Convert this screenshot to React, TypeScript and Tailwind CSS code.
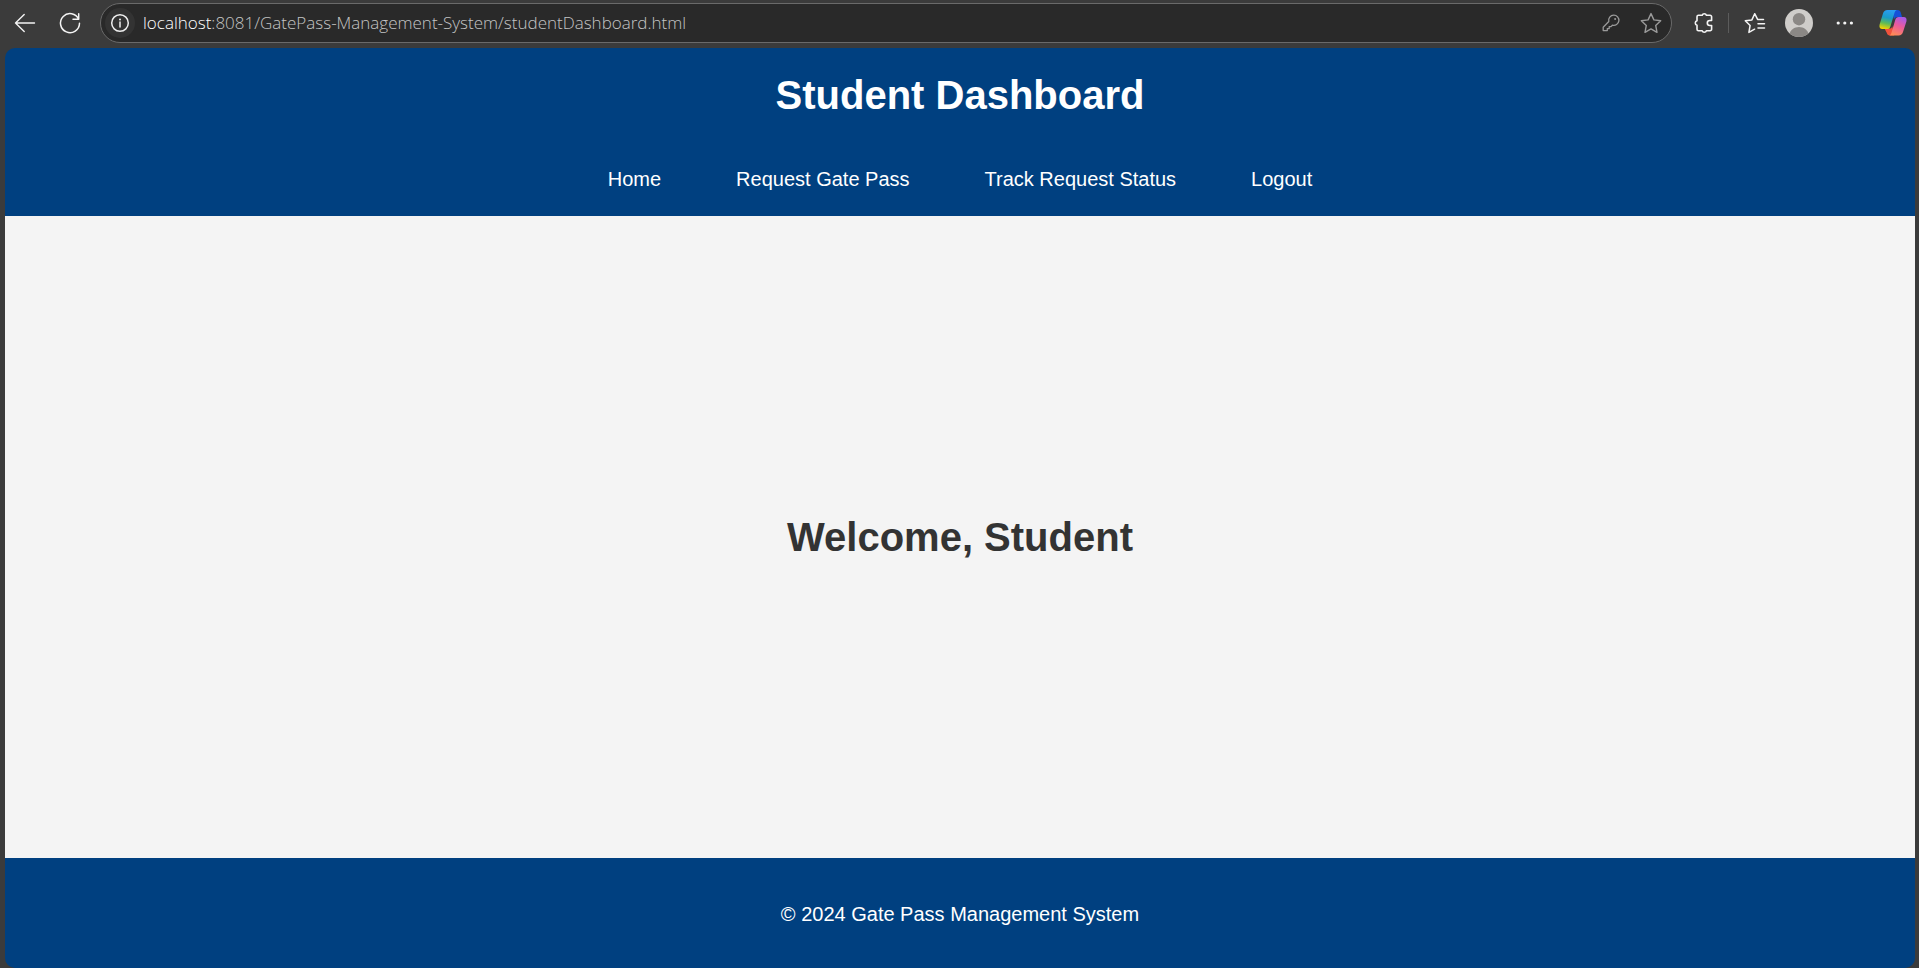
const navLinks = ["Home", "Request Gate Pass", "Track Request Status", "Logout"];

function Toolbar() {
  return (
    <div className="flex h-12 items-center pr-3 pb-0.5 pl-3">
      <button aria-label="Back" className="flex size-6 items-center justify-center">
        <svg width="24" height="24" viewBox="0 0 24 24" fill="none" stroke="#f4f4f4" strokeWidth="1.4" strokeLinecap="round" strokeLinejoin="round">
          <path d="M22.500 12H3.500M12.200 3.500 3.500 12l8.700 8.500" />
        </svg>
      </button>
      <button aria-label="Refresh" className="ml-[22px] flex size-6 items-center justify-center">
        <svg width="24" height="24" viewBox="0 0 24 24" fill="none" stroke="#f4f4f4" strokeWidth="1.5" strokeLinecap="round" strokeLinejoin="round">
          <path d="M20.700 8.300A9.500 9.500 0 1 0 21.500 12.200M20.700 2.700V8.300H15" />
        </svg>
      </button>
      <div className="ml-[18px] flex h-10 min-w-0 flex-1 items-center rounded-full border border-[#6a6a6a] bg-[#292929] pr-2 pl-1">
        <button aria-label="View site information" className="flex size-[30px] shrink-0 items-center justify-center rounded-full bg-[#333333]">
          <svg width="20" height="20" viewBox="0 0 20 20" fill="none" stroke="#eeeeee" strokeWidth="1.5">
            <circle cx="10" cy="10" r="8.300" />
            <path d="M10 9v5" strokeLinecap="round" />
            <circle cx="10" cy="6.500" r="1" fill="#eeeeee" stroke="none" />
          </svg>
        </button>
        <div className="ml-2 min-w-0 flex-1 truncate font-['Open_Sans','Noto_Sans',sans-serif] text-[17px] leading-6 font-light text-[#c4c4c4]">
          <span className="text-white">localhost</span>:8081/GatePass-Management-System/studentDashboard.html
        </div>
        <button aria-label="Saved passwords" className="flex size-5 shrink-0 items-center justify-center">
          <svg width="20" height="20" viewBox="0 0 20 20" fill="none" stroke="#9a9a9a" strokeWidth="1.300" strokeLinejoin="round">
            <path d="M12.700 2.200a5.100 5.100 0 1 1-1.300 10L10 13.600H8.200v2H6.300v2H2.200v-3.400l5.600-5.700A5.100 5.100 0 0 1 12.700 2.200Z" />
            <circle cx="14.100" cy="6" r="1" fill="#9a9a9a" stroke="none" />
          </svg>
        </button>
        <button aria-label="Add this page to favorites" className="ml-[18px] flex size-6 shrink-0 items-center justify-center">
          <svg width="24" height="24" viewBox="0 0 24 24" fill="none" stroke="#9a9a9a" strokeWidth="1.400" strokeLinejoin="round">
            <path d="m12 2.600 2.900 6.300 6.800.8-5 4.700 1.300 6.900L12 17.900l-6 3.400 1.300-6.900-5-4.700 6.800-.8Z" />
          </svg>
        </button>
      </div>
      <button aria-label="Extensions" className="ml-5 flex size-6 shrink-0 items-center justify-center">
        <svg width="24" height="24" viewBox="0 0 24 24" fill="none" stroke="#f4f4f4" strokeWidth="1.600" strokeLinejoin="round">
          <path d="M6.500 4.300h3.700a2.200 2.200 0 0 1 4.200 0h3.700a1.500 1.500 0 0 1 1.500 1.500v3.700h-1.800a2.500 2.500 0 0 0 0 5h1.800v3.700a1.500 1.500 0 0 1-1.500 1.500h-3.700a2.200 2.200 0 0 1-4.200 0H6.500A1.500 1.500 0 0 1 5 18.200v-3.900a2.400 2.400 0 0 1 0-4.600V5.800a1.500 1.500 0 0 1 1.500-1.500Z" />
        </svg>
      </button>
      <div className="ml-3 h-5 w-px bg-[#5c5c5c]" />
      <button aria-label="Favorites" className="ml-3.5 flex size-6 shrink-0 items-center justify-center">
        <svg width="24" height="24" viewBox="0 0 24 24" fill="none" stroke="#f4f4f4" strokeWidth="1.500" strokeLinejoin="round" strokeLinecap="round">
          <path d="M20.500 8.400h-5.900l-2.900-5.700-2.800 6.200-6.600.9 4.800 4.700L5.900 21.400l5.700-3.200M15 12.800h6.500M15 17h6.500" />
        </svg>
      </button>
      <button aria-label="Profile" className="ml-[18px] size-7 shrink-0 overflow-hidden rounded-full">
        <svg width="28" height="28" viewBox="0 0 28 28">
          <rect width="28" height="28" fill="#cfcdca" />
          <circle cx="14" cy="10.200" r="6.200" fill="#8b8885" />
          <path d="M4.300 25.500C5.500 20.700 9.300 18 14 18s8.500 2.700 9.700 7.500L14 30Z" fill="#8b8885" />
        </svg>
      </button>
      <button aria-label="Settings and more" className="ml-5 flex size-6 shrink-0 items-center justify-center">
        <svg width="24" height="24" viewBox="0 0 24 24" fill="#f4f4f4">
          <circle cx="5.200" cy="12" r="1.600" />
          <circle cx="11.800" cy="12" r="1.600" />
          <circle cx="18.400" cy="12" r="1.600" />
        </svg>
      </button>
      <button aria-label="Copilot" className="ml-[22px] flex size-7 shrink-0 items-center justify-center">
        <svg width="28" height="28" viewBox="0 0 28 28">
          <defs>
            <linearGradient id="cool" x1="0.500" y1="0" x2="0.300" y2="1">
              <stop offset="0" stopColor="#2a9cf0" />
              <stop offset="0.400" stopColor="#199bc7" />
              <stop offset="0.700" stopColor="#5fbb56" />
              <stop offset="1" stopColor="#f5d400" />
            </linearGradient>
            <linearGradient id="warm" x1="0.700" y1="0" x2="0.300" y2="1">
              <stop offset="0" stopColor="#a85be8" />
              <stop offset="0.450" stopColor="#ea5a9d" />
              <stop offset="1" stopColor="#ff8b55" />
            </linearGradient>
          </defs>
          <path d="M13 1h5.500c2 0 2.900 1.100 3.400 2.900L23 8h-4.500c-2 0-3 1-3.500 2.800Z" fill="#1550d8" />
          <path d="M5.500 19.600h5c1.500 0 2.300-.8 2.800-2.300l1.900 9.200H11c-2 0-2.800-1.100-3.400-3Z" fill="#f0523c" />
          <path d="M8.500 1h9.300c-1.500.5-2 1.700-2.500 3.400l-3.800 12.800c-.6 2-1.600 2.800-3.500 2.800H3.500C.8 20 0 18 .6 15.500L4 4.500C4.700 2.200 6 1 8.500 1Z" fill="url(#cool)" />
          <path d="M19.800 8h4.700c2.700 0 3.500 2 2.900 4.500L24 23c-.7 2.300-2 3.500-4.500 3.500h-9.300c1.500-.5 2-1.700 2.500-3.400l3.600-12.300c.6-2 1.600-2.800 3.500-2.800Z" fill="url(#warm)" />
        </svg>
      </button>
    </div>
  );
}

export default function App() {
  return (
    <div className="flex min-h-screen flex-col bg-[#3b3b3b]">
      <Toolbar />
      <div className="mr-1 ml-[5px] flex flex-1 flex-col font-['Liberation_Sans',Arial,sans-serif]">
        <header className="rounded-t-[10px] bg-[#004080] pt-6 pb-[23px] text-center text-white">
          <h1 className="text-[40px] leading-[46px] font-bold">Student Dashboard</h1>
          <nav className="mt-[49px]">
            <ul className="flex flex-wrap justify-center gap-x-[75px]">
              {navLinks.map((label) => (
                <li key={label}>
                  <a href="#" className="text-xl leading-6">{label}</a>
                </li>
              ))}
            </ul>
          </nav>
        </header>
        <main className="flex flex-1 items-center justify-center bg-[#f4f4f4]">
          <h2 className="text-[40px] leading-[46px] font-bold text-[#333333]">Welcome, Student</h2>
        </main>
        <footer className="rounded-b-[10px] bg-[#004080] pt-11 pb-[42px] text-center text-white">
          <p className="text-xl leading-6">© 2024 Gate Pass Management System</p>
        </footer>
      </div>
    </div>
  );
}
